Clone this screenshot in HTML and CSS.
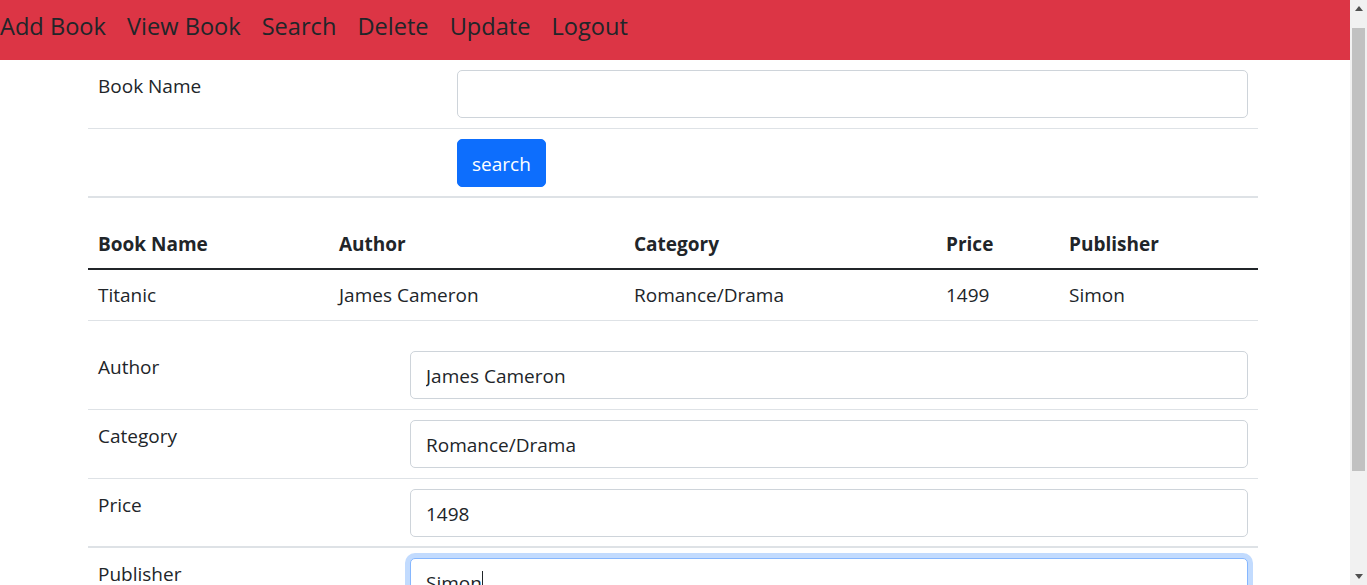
FILE: index.html
```html
<!DOCTYPE html>
<html lang="en">
<head>
<meta charset="utf-8">
<title>Update Book</title>
<link rel="stylesheet" href="styles.css">
</head>
<body>
<div class="page">
<nav class="topnav">
  <a class="nav-link" href="#">Add Book</a>
  <a class="nav-link" href="#">View Book</a>
  <a class="nav-link" href="#">Search</a>
  <a class="nav-link" href="#">Delete</a>
  <a class="nav-link" href="#">Update</a>
  <a class="nav-link" href="#">Logout</a>
</nav>
<main class="container">
  <table class="table form-table search-form">
    <tbody>
      <tr>
        <td class="label-cell"><label class="col-label">Book Name</label></td>
        <td><input class="form-control" type="text"></td>
      </tr>
      <tr class="last-row">
        <td></td>
        <td><button class="btn btn-primary" type="button">search</button></td>
      </tr>
    </tbody>
  </table>

  <table class="table result-table">
    <thead>
      <tr>
        <th class="c-name">Book Name</th>
        <th class="c-author">Author</th>
        <th class="c-cat">Category</th>
        <th class="c-price">Price</th>
        <th class="c-pub">Publisher</th>
      </tr>
    </thead>
    <tbody>
      <tr>
        <td>Titanic</td>
        <td>James Cameron</td>
        <td>Romance/Drama</td>
        <td>1499</td>
        <td>Simon</td>
      </tr>
    </tbody>
  </table>

  <table class="table form-table update-form">
    <tbody>
      <tr>
        <td class="label-cell"><label class="col-label">Author</label></td>
        <td><input class="form-control" type="text" value="James Cameron"></td>
      </tr>
      <tr>
        <td class="label-cell"><label class="col-label">Category</label></td>
        <td><input class="form-control" type="text" value="Romance/Drama"></td>
      </tr>
      <tr class="thick-row">
        <td class="label-cell"><label class="col-label">Price</label></td>
        <td><input class="form-control" type="text" value="1498"></td>
      </tr>
      <tr>
        <td class="label-cell"><label class="col-label">Publisher</label></td>
        <td><div class="form-control focused">Simon<span class="caret"></span></div></td>
      </tr>
      <tr>
        <td></td>
        <td><button class="btn btn-primary" type="button">update</button></td>
      </tr>
    </tbody>
  </table>
</main>
</div>
<div class="scrollbar" aria-hidden="true">
  <div class="sb-btn"><span class="arrow-up"></span></div>
  <div class="sb-track"><div class="sb-thumb"></div></div>
  <div class="sb-btn"><span class="arrow-down"></span></div>
</div>
</body>
</html>
```

FILE: styles.css
```css
* { box-sizing: border-box; }

html, body {
  margin: 0;
  padding: 0;
  overflow: hidden;
}

body {
  display: flex;
  height: 100vh;
  font-family: "Open Sans", "Noto Sans", sans-serif;
  font-size: 19px;
  line-height: 30px;
  color: #212529;
  background: #fff;
}

.page {
  flex: 1;
  min-width: 0;
  height: 100vh;
  overflow: hidden;
}

.scrollbar {
  width: 17px;
  flex: none;
  height: 100vh;
  background: #f1f1f1;
  display: flex;
  flex-direction: column;
}

.sb-btn {
  height: 17px;
  flex: none;
  display: flex;
  align-items: center;
  justify-content: center;
}

.arrow-up,
.arrow-down {
  width: 0;
  height: 0;
  border-left: 4.5px solid transparent;
  border-right: 4.5px solid transparent;
}

.arrow-up { border-bottom: 5px solid #505050; }
.arrow-down { border-top: 5px solid #505050; }

.sb-track {
  flex: 1;
  padding: 11px 2px 0;
}

.sb-thumb {
  height: 443px;
  background: #c1c1c1;
}

.topnav {
  height: 60px;
  background: #dc3545;
  display: flex;
  gap: 21px;
  padding-top: 10px;
}

.nav-link {
  font-size: 23.6px;
  line-height: 32px;
  color: #212529;
  text-decoration: none;
}

.container {
  width: 1170px;
  margin-left: 88px;
}

.table {
  width: 100%;
  border-collapse: collapse;
  margin-bottom: 20px;
  table-layout: fixed;
}

.search-form { margin-bottom: 21px; }

.table td,
.table th {
  padding: 10px;
  border-bottom: 1px solid #dee2e6;
  vertical-align: top;
  text-align: left;
}

.search-form .label-cell { width: 359px; }
.update-form .label-cell { width: 312px; }

.search-form .last-row td { border-bottom: 2px solid #dee2e6; padding-bottom: 9px; }
.update-form .thick-row td { border-bottom: 2px solid #dee2e6; padding-bottom: 9px; }

.col-label {
  display: block;
  padding-top: 1px;
}

.form-control {
  display: block;
  width: 100%;
  height: 48px;
  padding: 9px 15px 7px;
  font: inherit;
  font-size: 19px;
  line-height: 30px;
  color: #212529;
  background: #fff;
  border: 1px solid #ced4da;
  border-radius: 5px;
  outline: none;
}

.form-control.focused {
  border-color: #86b7fe;
  box-shadow: 0 0 0 5px rgba(13, 110, 253, 0.25);
}

.caret {
  display: inline-block;
  width: 1px;
  height: 24px;
  background: #212529;
  vertical-align: -5px;
}

.btn {
  height: 48px;
  padding: 9px 14px 7px;
  font: inherit;
  font-size: 19px;
  line-height: 30px;
  border-radius: 5px;
  border: 1px solid transparent;
  cursor: pointer;
}

.btn-primary {
  background: #0d6efd;
  border-color: #0d6efd;
  color: #fff;
}

.result-table th {
  font-weight: 700;
  border-bottom: 2px solid #212529;
  padding-bottom: 9px;
}

.result-table .c-name { width: 241px; }
.result-table .c-author { width: 295px; }
.result-table .c-cat { width: 312px; }
.result-table .c-price { width: 123px; }
.result-table .c-pub { width: 199px; }
```
